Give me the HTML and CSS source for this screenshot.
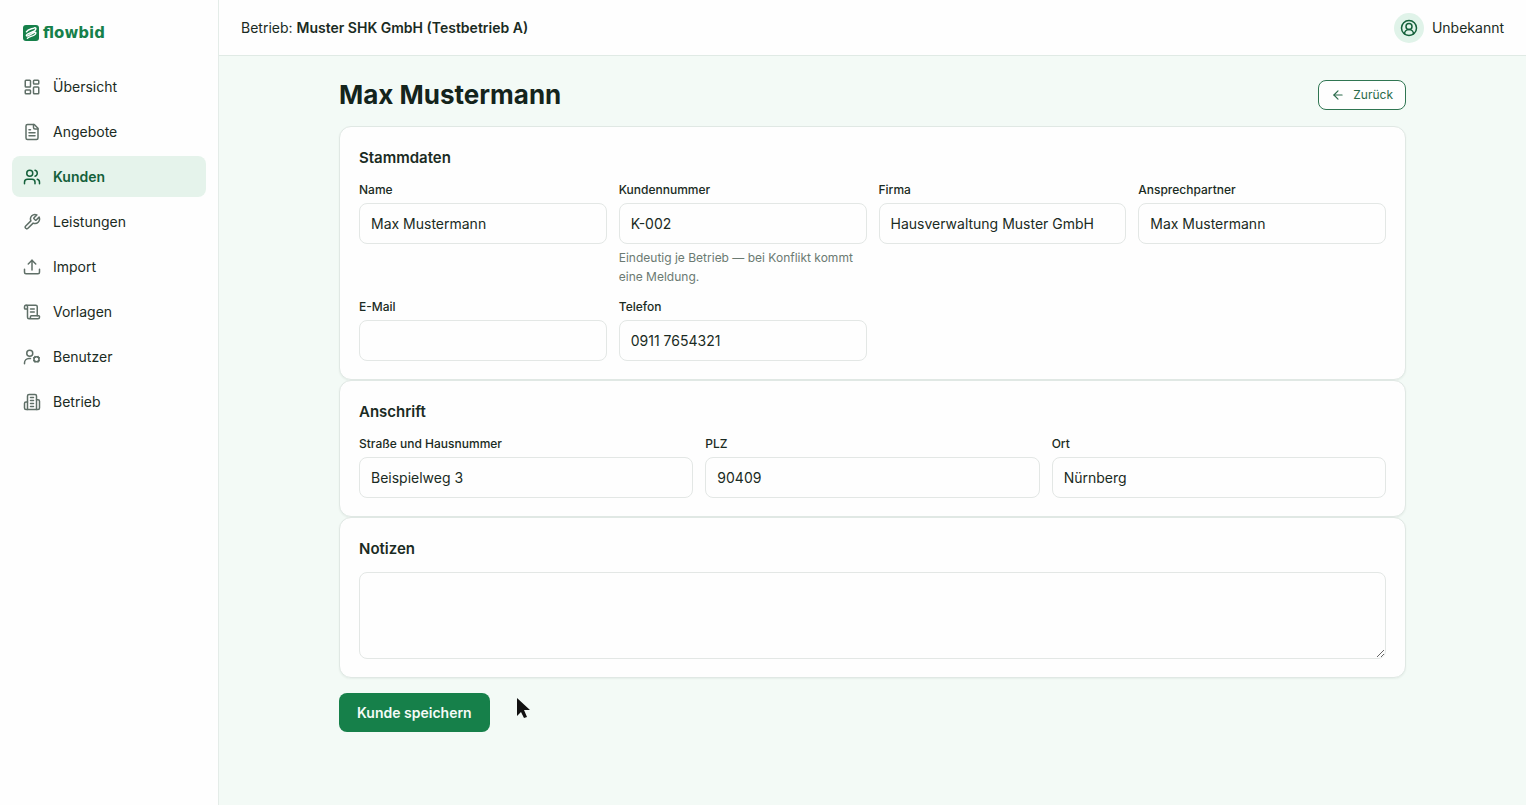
FILE: index.html
```html
<!DOCTYPE html>
<html lang="de">
    <head>
        <meta charset="utf-8">
        <meta name="viewport" content="width=device-width, initial-scale=1">
        <title>Max Mustermann</title>
        <link rel="stylesheet" href="styles.css">
    </head>
    <body>
        <aside class="sidebar">
            <a href="#" class="logo">
                <svg class="logo-mark" viewBox="0 0 16 16">
                    <rect width="16" height="16" rx="3" fill="#16804a"/>
                    <path d="M3.4 6.8C5 3.8 8.4 4.2 11.6 2.8C13.6 2.4 13 4.8 11.4 5.8L4.4 9.2C2.4 10.6 3.6 11.4 5.4 10.6L11.4 7.4C13.6 6.8 13 9 11.4 10C9 11.6 6.6 11.4 4.4 13.2" fill="none" stroke="#fff" stroke-width="1.4" stroke-linecap="round" stroke-linejoin="round"/>
                </svg>
                <span>flowbid</span>
            </a>

            <nav class="nav">
                <a href="#" class="nav-item">
                    <svg class="icon" viewBox="0 0 24 24"><rect width="7" height="9" x="3" y="3" rx="1"/><rect width="7" height="5" x="14" y="3" rx="1"/><rect width="7" height="9" x="14" y="12" rx="1"/><rect width="7" height="5" x="3" y="16" rx="1"/></svg>
                    Übersicht
                </a>
                <a href="#" class="nav-item">
                    <svg class="icon" viewBox="0 0 24 24"><path d="M15 2H6a2 2 0 0 0-2 2v16a2 2 0 0 0 2 2h12a2 2 0 0 0 2-2V7Z"/><path d="M14 2v4a2 2 0 0 0 2 2h4"/><path d="M10 9H8"/><path d="M16 13H8"/><path d="M16 17H8"/></svg>
                    Angebote
                </a>
                <a href="#" class="nav-item active">
                    <svg class="icon" viewBox="0 0 24 24"><path d="M16 21v-2a4 4 0 0 0-4-4H6a4 4 0 0 0-4 4v2"/><circle cx="9" cy="7" r="4"/><path d="M22 21v-2a4 4 0 0 0-3-3.87"/><path d="M16 3.13a4 4 0 0 1 0 7.75"/></svg>
                    Kunden
                </a>
                <a href="#" class="nav-item">
                    <svg class="icon" viewBox="0 0 24 24"><path d="M14.7 6.3a1 1 0 0 0 0 1.4l1.6 1.6a1 1 0 0 0 1.4 0l3.77-3.77a6 6 0 0 1-7.94 7.94l-6.91 6.91a2.12 2.12 0 0 1-3-3l6.91-6.91a6 6 0 0 1 7.94-7.94l-3.76 3.76z"/></svg>
                    Leistungen
                </a>
                <a href="#" class="nav-item">
                    <svg class="icon" viewBox="0 0 24 24"><path d="M12 16V3"/><path d="m7 8 5-5 5 5"/><path d="M2 15v4a2 2 0 0 0 2 2h16a2 2 0 0 0 2-2v-4"/></svg>
                    Import
                </a>
                <a href="#" class="nav-item">
                    <svg class="icon" viewBox="0 0 24 24"><path d="M15 12h-5"/><path d="M15 8h-5"/><path d="M19 17V5a2 2 0 0 0-2-2H4"/><path d="M8 21h12a2 2 0 0 0 2-2v-1a1 1 0 0 0-1-1H11a1 1 0 0 0-1 1v1a2 2 0 1 1-4 0V5a2 2 0 1 0-4 0v2a1 1 0 0 0 1 1h3"/></svg>
                    Vorlagen
                </a>
                <a href="#" class="nav-item">
                    <svg class="icon" viewBox="0 0 24 24"><path d="M2 21v-1a6 6 0 0 1 6-6h2"/><circle cx="9" cy="7" r="4"/><circle cx="18" cy="15" r="3.4"/><path d="m20 11.3-.3.7"/><path d="m16.3 18-.3.7"/><path d="m21.7 17-.7-.3"/><path d="m15 13.3-.7-.3"/><path d="m21.7 13-.7.3"/><path d="m15 16.7-.7.3"/><path d="m20 18.7-.3-.7"/><path d="m16.3 12-.3-.7"/></svg>
                    Benutzer
                </a>
                <a href="#" class="nav-item">
                    <svg class="icon" viewBox="0 0 24 24"><path d="M6 22V4a2 2 0 0 1 2-2h8a2 2 0 0 1 2 2v18Z"/><path d="M6 12H4a2 2 0 0 0-2 2v6a2 2 0 0 0 2 2h2"/><path d="M18 9h2a2 2 0 0 1 2 2v9a2 2 0 0 1-2 2h-2"/><path d="M10 6h4"/><path d="M10 10h4"/><path d="M10 14h4"/><path d="M10 18h4"/></svg>
                    Betrieb
                </a>
            </nav>
        </aside>

        <div class="page">
            <header class="topbar">
                <div>Betrieb: <strong>Muster SHK GmbH (Testbetrieb A)</strong></div>
                <div class="user">
                    <span class="avatar">
                        <svg class="icon" viewBox="0 0 24 24"><path d="M18 20a6 6 0 0 0-12 0"/><circle cx="12" cy="10" r="4"/><circle cx="12" cy="12" r="10"/></svg>
                    </span>
                    Unbekannt
                </div>
            </header>

            <main class="content">
                <div class="title-row">
                    <h1>Max Mustermann</h1>
                    <a href="#" class="back">
                        <svg class="icon" viewBox="0 0 24 24"><path d="m12 19-7-7 7-7"/><path d="M19 12H5"/></svg>
                        Zurück
                    </a>
                </div>

                <form>
                    <section class="card">
                        <h2>Stammdaten</h2>
                        <div class="grid cols-4">
                            <div class="field">
                                <label for="name">Name</label>
                                <input type="text" id="name" value="Max Mustermann">
                            </div>
                            <div class="field">
                                <label for="number">Kundennummer</label>
                                <input type="text" id="number" value="K-002" aria-describedby="number-hint">
                                <p class="hint" id="number-hint">Eindeutig je Betrieb — bei Konflikt kommt eine Meldung.</p>
                            </div>
                            <div class="field">
                                <label for="company">Firma</label>
                                <input type="text" id="company" value="Hausverwaltung Muster GmbH">
                            </div>
                            <div class="field">
                                <label for="contact">Ansprechpartner</label>
                                <input type="text" id="contact" value="Max Mustermann">
                            </div>
                            <div class="field">
                                <label for="email">E-Mail</label>
                                <input type="email" id="email">
                            </div>
                            <div class="field">
                                <label for="phone">Telefon</label>
                                <input type="tel" id="phone" value="0911 7654321">
                            </div>
                        </div>
                    </section>

                    <section class="card">
                        <h2>Anschrift</h2>
                        <div class="grid cols-3">
                            <div class="field">
                                <label for="street">Straße und Hausnummer</label>
                                <input type="text" id="street" value="Beispielweg 3">
                            </div>
                            <div class="field">
                                <label for="zip">PLZ</label>
                                <input type="text" id="zip" value="90409">
                            </div>
                            <div class="field">
                                <label for="city">Ort</label>
                                <input type="text" id="city" value="Nürnberg">
                            </div>
                        </div>
                    </section>

                    <section class="card">
                        <h2><label for="notes">Notizen</label></h2>
                        <textarea id="notes"></textarea>
                    </section>

                    <button type="submit" class="save">Kunde speichern</button>
                </form>
            </main>
        </div>

        <svg class="cursor" viewBox="0 0 14 22"><path d="M1 1v18l4-4 3 6 3-1-3-7h6Z" fill="#111"/></svg>

    </body>
</html>
```
FILE: styles.css
```css
* {
    box-sizing: border-box;
}
body {
    margin: 0;
    display: flex;
    min-height: 100vh;
    font-family: Inter, "Liberation Sans", sans-serif;
    font-size: 14px;
    line-height: 22px;
    color: #1a2b23;
    background: #f3faf6;
}
a {
    color: inherit;
    text-decoration: none;
}
h1, h2, p {
    margin: 0;
}
.icon {
    width: 18px;
    height: 18px;
    flex: none;
    fill: none;
    stroke: currentColor;
    stroke-width: 2;
    stroke-linecap: round;
    stroke-linejoin: round;
}

/* sidebar */
.sidebar {
    flex: none;
    width: 219px;
    padding: 22px 12px;
    background: #fefefe;
    border-right: 1px solid #e4ece8;
}
.logo {
    display: flex;
    align-items: center;
    gap: 4px;
    padding: 0 11px;
    margin-bottom: 22px;
    font-family: "DejaVu Sans", sans-serif;
    font-size: 15px;
    font-weight: bold;
    color: #16804a;
}
.logo-mark {
    width: 16px;
    height: 16px;
}
.nav {
    display: flex;
    flex-direction: column;
    gap: 4px;
}
.nav-item {
    display: flex;
    align-items: center;
    gap: 12px;
    height: 41px;
    padding: 0 11px;
    border-radius: 8px;
}
.nav-item .icon {
    color: #5f6f67;
}
.nav-item.active {
    background: #e5f3eb;
    color: #14603a;
    font-weight: 600;
}
.nav-item.active .icon {
    color: #14603a;
}

/* top bar */
.page {
    flex: 1;
    min-width: 0;
}
.topbar {
    display: flex;
    align-items: center;
    justify-content: space-between;
    height: 56px;
    padding: 0 22px;
    background: #fefefe;
    border-bottom: 1px solid #e0eae5;
}
.topbar strong {
    font-weight: 600;
}
.user {
    display: flex;
    align-items: center;
    gap: 8px;
}
.avatar {
    display: flex;
    align-items: center;
    justify-content: center;
    width: 30px;
    height: 30px;
    border-radius: 50%;
    background: #e0f3e9;
    color: #14603a;
}

/* content */
.content {
    max-width: 1067px;
    margin: 0 auto;
    padding: 24px 0;
}
.title-row {
    display: flex;
    align-items: center;
    justify-content: space-between;
    margin-bottom: 16px;
}
h1 {
    font-size: 26px;
    line-height: 30px;
    font-weight: 700;
    color: #14241c;
}
.back {
    display: flex;
    align-items: center;
    gap: 8px;
    height: 30px;
    padding: 0 12px;
    border: 1px solid #2f7552;
    border-radius: 8px;
    background: #fefefe;
    color: #2a6b4a;
    font-size: 12px;
}
.back .icon {
    width: 14px;
    height: 14px;
}
.card {
    padding: 19px 19px 18px;
    background: #fefefe;
    border: 1px solid #e0e8e4;
    border-radius: 12px;
    box-shadow: 0 1px 2px rgba(20, 60, 40, 0.06);
}
h2 {
    margin-bottom: 11px;
    font-size: 15px;
    line-height: 24px;
    font-weight: 600;
}
.grid {
    display: grid;
    gap: 12px;
}
.cols-4 {
    grid-template-columns: repeat(4, 1fr);
}
.cols-3 {
    grid-template-columns: repeat(3, 1fr);
}
.field {
    display: flex;
    flex-direction: column;
    gap: 4px;
    min-width: 0;
}
.field label {
    font-size: 12px;
    line-height: 18px;
    font-weight: 500;
}
input, textarea {
    display: block;
    width: 100%;
    height: 41px;
    padding: 0 11px;
    border: 1px solid #e3e7e5;
    border-radius: 8px;
    background: #fefefe;
    color: inherit;
    font: inherit;
}
textarea {
    height: 87px;
    padding: 8px 11px;
    resize: vertical;
}
.hint {
    font-size: 12px;
    line-height: 19px;
    color: #6b7a72;
}
.save {
    height: 39px;
    margin-top: 15px;
    padding: 0 18px;
    border: 0;
    border-radius: 8px;
    background: #16804a;
    color: #f4fbf7;
    font: inherit;
    font-weight: 600;
}
.cursor {
    position: absolute;
    left: 516px;
    top: 697px;
    width: 14px;
    height: 22px;
}
```
